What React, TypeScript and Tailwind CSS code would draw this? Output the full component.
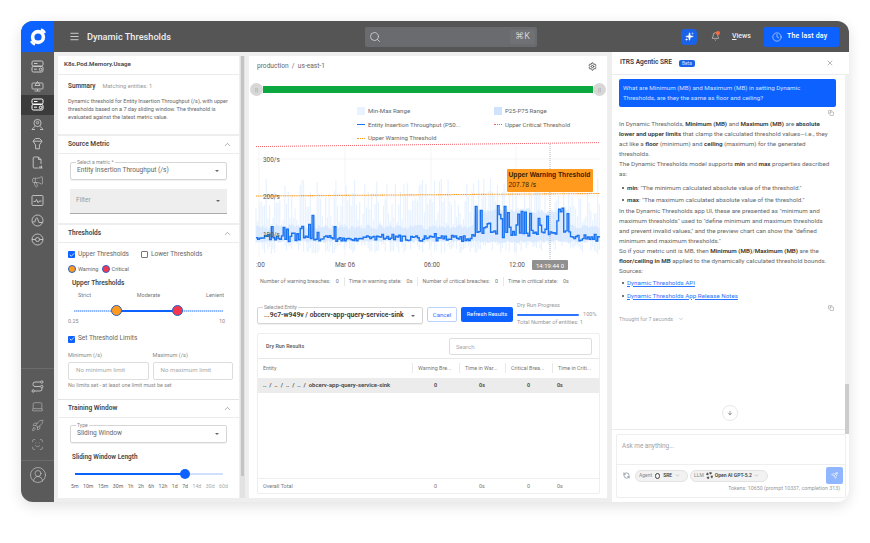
import React from "react";
import {
  ArrowDown,
  Bell,
  Check,
  ChevronDown,
  ChevronUp,
  CircleUserRound,
  Clock,
  Copy,
  Laptop,
  Menu,
  Megaphone,
  RefreshCcw,
  Rocket,
  ScanFace,
  Search,
  Send,
  Settings,
  Sparkles,
  X,
} from "lucide-react";

const font = { fontFamily: '"Roboto", "Liberation Sans", sans-serif' };

function ServerIcon() {
  return (
    <svg width="13" height="13" viewBox="0 0 13 13" fill="none" stroke="currentColor" strokeWidth="1">
      <rect x="1" y="1" width="11" height="5" rx="1.3" />
      <rect x="1" y="6.5" width="11" height="5.5" rx="1.3" />
      <path d="M3 3.5h3.5M3 9.2h3" />
      <circle cx="9.6" cy="9.4" r="1.3" />
    </svg>
  );
}

function MonitorIcon() {
  return (
    <svg width="13" height="13" viewBox="0 0 13 13" fill="none" stroke="currentColor" strokeWidth="0.9">
      <rect x="1" y="4" width="11" height="6" rx="0.8" />
      <path d="M3.5 12h6M6.5 10v2M4 6.5l2.5-4 2.5 4z" />
    </svg>
  );
}

function SearchUserIcon() {
  return (
    <svg width="13" height="13" viewBox="0 0 13 13" fill="none" stroke="currentColor" strokeWidth="0.9">
      <circle cx="6.5" cy="5" r="3.6" />
      <circle cx="6.5" cy="4.6" r="1.2" />
      <path d="M1 11.5c1-1.6 2-2.4 3.2-3.2M12 11.5c-1-1.6-2-2.4-3.2-3.2M1 11.5h3M9 11.5h3" />
    </svg>
  );
}

function FunnelIcon() {
  return (
    <svg width="13" height="13" viewBox="0 0 13 13" fill="none" stroke="currentColor" strokeWidth="0.9">
      <path d="M2 4.2 4.4 1.5h4.2L11 4.2 8.4 8v3.8H4.6V8z" />
      <path d="M2 4.2h9" />
    </svg>
  );
}

function FileIcon() {
  return (
    <svg width="13" height="13" viewBox="0 0 13 13" fill="none" stroke="currentColor" strokeWidth="0.9">
      <path d="M7.5 12H3.2a1 1 0 0 1-1-1V2a1 1 0 0 1 1-1h4.3L10 3.5V8" />
      <path d="M7.5 1v2.5H10M8 12h3.5M9 12v-2M10.5 12V9.5" />
    </svg>
  );
}

function ChartBoxIcon() {
  return (
    <svg width="13" height="13" viewBox="0 0 13 13" fill="none" stroke="currentColor" strokeWidth="0.9">
      <rect x="1" y="1.5" width="11" height="10" rx="1" />
      <path d="M2.5 7.5h2l1-2 1.6 3.2 1-1.6h2.5" />
    </svg>
  );
}

function GaugeIcon() {
  return (
    <svg width="13" height="13" viewBox="0 0 13 13" fill="none" stroke="currentColor" strokeWidth="0.9">
      <circle cx="6.5" cy="6.5" r="5.5" />
      <path d="M1.5 8h2.2l1.4-3.5c.4-1 1-1 1.4 0L8 8.5h3.5" />
    </svg>
  );
}

function TargetIcon() {
  return (
    <svg width="13" height="13" viewBox="0 0 13 13" fill="none" stroke="currentColor" strokeWidth="0.9">
      <circle cx="6.5" cy="6.5" r="5.5" />
      <circle cx="6.5" cy="6.5" r="2" />
      <path d="M1 6.5h3.5M8.5 6.5H12" />
    </svg>
  );
}

function RoutesIcon() {
  return (
    <svg width="13" height="13" viewBox="0 0 13 13" fill="none" stroke="currentColor" strokeWidth="0.9">
      <circle cx="2.2" cy="11" r="1.2" />
      <circle cx="10.8" cy="2" r="1.2" />
      <circle cx="10.8" cy="6.5" r="1.2" />
      <path d="M9.5 2H4a2 2 0 0 0-2 2v.5a2 2 0 0 0 2 2h5.5M3.5 11H9a2 2 0 0 0 2-2V7.8" />
    </svg>
  );
}

function Logo() {
  return (
    <svg width="20" height="20" viewBox="0 0 20 20" fill="none">
      <circle cx="10" cy="10" r="5.4" stroke="white" strokeWidth="3.6" />
      <path d="M13 2.4a8.2 8.2 0 0 1 4 3.4M7 17.6a8.2 8.2 0 0 1-4-3.4" stroke="white" strokeWidth="2.4" />
    </svg>
  );
}

function Sidebar() {
  const top = [ServerIcon, MonitorIcon, ServerIcon, SearchUserIcon, FunnelIcon, FileIcon, null, ChartBoxIcon, GaugeIcon, TargetIcon];
  return (
    <aside className="flex w-[33px] shrink-0 flex-col bg-[#5a5a5a] text-[#c9c9c9]">
      <div className="flex h-[31px] items-center justify-center bg-[#0d62ff]">
        <Logo />
      </div>
      <div className="mt-[5px] flex flex-col">
        {top.map((Icon, i) => (
          <div key={i} className={`flex h-[19.2px] items-center justify-center ${i === 2 ? "bg-[#3b3b3b] text-white" : ""}`}>
            {Icon ? <Icon /> : <Megaphone size={13} strokeWidth={1.1} />}
          </div>
        ))}
      </div>
      <div className="mt-auto flex flex-col items-center border-t border-[#6b6b6b] pt-[8px]">
        <div className="flex h-[19.2px] items-center"><RoutesIcon /></div>
        <div className="flex h-[19.2px] items-center"><Laptop size={13} strokeWidth={1} /></div>
        <div className="flex h-[19.2px] items-center"><Rocket size={13} strokeWidth={1} /></div>
        <div className="flex h-[19.2px] items-center"><ScanFace size={13} strokeWidth={1} /></div>
      </div>
      <div className="mt-[6px] flex h-[42px] items-start justify-center border-t border-[#6b6b6b] pt-[5px]">
        <CircleUserRound size={18} strokeWidth={0.9} />
      </div>
    </aside>
  );
}

function Header() {
  return (
    <header className="flex h-[31px] items-center bg-[#555555] text-white">
      <Menu size={11} className="ml-[15px]" strokeWidth={1.5} />
      <span className="ml-[7px] w-[278px] text-[9.2px] font-medium text-[#eeeeee]">Dynamic Thresholds</span>
      <div className="flex h-[20px] w-[172px] items-center justify-between rounded-[2px] bg-[#6a6b6e] pl-[4px] pr-[2px]">
        <Search size={12} className="text-[#d8d8d8]" strokeWidth={1.6} />
        <span className="flex h-[14px] w-[25px] items-center justify-center rounded-[2px] bg-[#707174] text-[9px] text-[#cfcfcf]">⌘K</span>
      </div>
      <div className="ml-[144px] flex h-[16px] w-[16px] items-center justify-center rounded-[4px] bg-[#1a62e8]">
        <Sparkles size={9} fill="white" strokeWidth={1} />
      </div>
      <div className="relative ml-[13px] flex w-[10px] justify-center">
        <Bell size={9} strokeWidth={1.3} />
        <span className="absolute right-[0px] top-[-1px] h-[4px] w-[4px] rounded-full bg-[#ff6a3d]" />
      </div>
      <span className="ml-[12px] w-[32px] text-[7px] font-medium text-[#eeeeee]"><u>V</u>iews</span>
      <div className="flex h-[20px] w-[75px] items-center gap-[5px] rounded-[2px] bg-[#0d62ff] pl-[8px]">
        <Clock size={10} strokeWidth={1.3} />
        <span className="text-[7px] font-medium tracking-[0.2px]">The last day</span>
      </div>
    </header>
  );
}

function Notched({ label, value, bold, className }: { label: string; value: string; bold?: boolean; className: string }) {
  return (
    <div className={`relative flex items-center justify-between rounded-[2px] border border-[#d6d6d6] pl-[6px] pr-[7px] shadow-[0_1px_1px_rgba(0,0,0,0.06)] ${className}`}>
      <span className="absolute left-[5px] top-[-3px] bg-white px-[1px] text-[5px] leading-[5px] text-[#888888]">{label}</span>
      <span className={`truncate ${bold ? "text-[6.8px] font-semibold text-[#333333]" : "text-[6.6px] text-[#666666]"}`}>{value}</span>
      <span className="h-0 w-0 border-x-[2px] border-t-[2px] border-x-transparent border-t-[#666666]" />
    </div>
  );
}

function CheckBox({ on }: { on: boolean }) {
  if (on) {
    return (
      <span className="flex h-[7px] w-[7px] items-center justify-center rounded-[1px] bg-[#0d62ff]">
        <Check size={6} color="white" strokeWidth={3} />
      </span>
    );
  }
  return <span className="h-[7px] w-[7px] rounded-[1px] border border-[#777777]" />;
}

function SectionHead({ title }: { title: string }) {
  return (
    <div className="flex h-[18px] items-center justify-between border-b border-[#ececec] pl-[10px] pr-[7px]">
      <span className="text-[6.6px] font-semibold text-[#444444]">{title}</span>
      <ChevronUp size={9} className="text-[#666666]" strokeWidth={1.4} />
    </div>
  );
}

function LeftPanel() {
  const lengths = ["5m", "10m", "15m", "30m", "1h", "2h", "6h", "12h", "1d", "7d", "14d", "30d", "60d"];
  return (
    <div className="flex shrink-0 gap-[1px]">
      <section className="h-[442px] w-[181px] overflow-hidden bg-white">
        <div className="flex h-[19px] items-center border-b border-[#ececec] pl-[6px] text-[6.2px] font-semibold text-[#444444]">K8s.Pod.Memory.Usage</div>
        <div className="h-[61px] border-b-2 border-[#eeeeee] pl-[10px] pr-[6px] pt-[7px]">
          <div className="flex items-baseline gap-[7px]">
            <span className="text-[6.4px] font-semibold text-[#444444]">Summary</span>
            <span className="text-[5.7px] text-[#999999]">Matching entities: 1</span>
          </div>
          <p className="mt-[5px] text-[5.5px] leading-[8.2px] text-[#666666]">
            Dynamic threshold for Entity Insertion Throughput (/s), with upper<br />
            thresholds based on a 7 day sliding window. The threshold is<br />
            evaluated against the latest metric value.
          </p>
        </div>
        <SectionHead title="Source Metric" />
        <div className="h-[71px] border-b-2 border-[#eeeeee] px-[12px] pt-[8px]">
          <Notched label="Select a metric *" value="Entity Insertion Throughput (/s)" className="h-[18px]" />
          <div className="mt-[9px] flex h-[25px] items-center justify-between border-b border-[#aaaaaa] bg-[#eeeeee] pl-[6px] pr-[7px] text-[6.6px] text-[#999999]">
            Filter
            <span className="h-0 w-0 border-x-[2px] border-t-[2px] border-x-transparent border-t-[#666666]" />
          </div>
        </div>
        <SectionHead title="Thresholds" />
        <div className="h-[157px] border-b border-[#e4e4e4] pl-[10px] pr-[5px] pt-[7px]">
          <div className="flex items-center gap-[3px] text-[6.5px] text-[#666666]">
            <CheckBox on />
            <span className="mr-[9px]">Upper Thresholds</span>
            <CheckBox on={false} />
            <span>Lower Thresholds</span>
          </div>
          <div className="mt-[5px] flex items-center gap-[2px] text-[5.6px] text-[#666666]">
            <span className="h-[8px] w-[8px] rounded-full border border-[#2563c9] bg-[#ff9a1f]" />
            <span className="mr-[1px]">Warning</span>
            <span className="h-[8px] w-[8px] rounded-full border border-[#2563c9] bg-[#f5364f]" />
            <span>Critical</span>
          </div>
          <div className="mt-[6px] pl-[4px] text-[6.6px] font-semibold text-[#444444]">Upper Thresholds</div>
          <div className="mt-[2px] flex justify-between pl-[10px] pr-[10px] text-[5.5px] text-[#777777]">
            <span>Strict</span>
            <span>Moderate</span>
            <span>Lenient</span>
          </div>
          <div className="relative ml-[6px] mt-[6px] h-[12px] w-[149px]">
            <div className="absolute left-0 right-0 top-[5px] h-[2px] border-y border-dotted border-[#8fb6ff] bg-[#cfe0ff]" />
            <div className="absolute left-[42px] top-[5px] h-[2px] w-[61px] bg-[#0d62ff]" />
            <span className="absolute left-[37px] top-[0px] h-[11px] w-[11px] rounded-full border border-[#2563c9] bg-[#ff9a1f]" />
            <span className="absolute left-[98px] top-[0px] h-[11px] w-[11px] rounded-full border border-[#2563c9] bg-[#f5364f]" />
          </div>
          <div className="mt-0 flex w-[157px] justify-between text-[5.4px] text-[#888888]">
            <span>0.25</span>
            <span>10</span>
          </div>
          <div className="mt-[9px] flex items-center gap-[3px] text-[6.5px] text-[#666666]">
            <CheckBox on />
            <span>Set Threshold Limits</span>
          </div>
          <div className="mt-[7px] grid w-[165px] grid-cols-2 gap-x-[4px]">
            <span className="text-[5.6px] text-[#888888]">Minimum (/s)</span>
            <span className="text-[5.6px] text-[#888888]">Maximum (/s)</span>
            <div className="mt-[2px] flex h-[18px] items-center rounded-[2px] border border-[#dddddd] pl-[7px] text-[6.2px] text-[#aaaaaa]">No minimum limit</div>
            <div className="mt-[2px] flex h-[18px] items-center rounded-[2px] border border-[#dddddd] pl-[7px] text-[6.2px] text-[#aaaaaa]">No maximum limit</div>
          </div>
          <div className="mt-[1px] text-[5.4px] text-[#888888]">No limits set - at least one limit must be set</div>
        </div>
        <SectionHead title="Training Window" />
        <div className="px-[12px] pt-[7px]">
          <Notched label="Type" value="Sliding Window" className="h-[18px]" />
          <div className="mt-[10px] pl-[2px] text-[6.4px] font-semibold text-[#444444]">Sliding Window Length</div>
          <div className="relative ml-[5px] mt-[6px] h-[10px] w-[148px]">
            <div className="absolute left-0 right-0 top-[4px] h-[2px] bg-[#cfe0ff]" />
            <div className="absolute left-0 top-[4px] h-[2px] w-[110px] bg-[#0d62ff]" />
            <span className="absolute left-[105px] top-0 h-[10px] w-[10px] rounded-full bg-[#0d62ff]" />
          </div>
          <div className="ml-[1px] mt-[4px] flex w-[157px] justify-between text-[5.2px]">
            {lengths.map((l, i) => (
              <span key={l} className={i > 9 ? "text-[#aaaaaa]" : "text-[#666666]"}>{l}</span>
            ))}
          </div>
        </div>
      </section>
      <div className="relative h-[442px] w-[5px] bg-[#e2e2e2]">
        <div className="absolute left-[1px] top-0 h-[420px] w-[3px] bg-[#c4c4c4]" />
      </div>
    </div>
  );
}

function rng(seed: number) {
  let s = seed;
  return () => {
    s = (s * 16807) % 2147483647;
    return (s - 1) / 2147483646;
  };
}

const X0 = 7;
const X1 = 351;

function envelope(x: number) {
  if (x > 225 && x < 320) return 1;
  if (x > 50 && x < 70) return 0.85;
  if (x > 20 && x < 90) return 0.45;
  return 0.15;
}

function buildChart() {
  const r = rng(4711);
  const points: { x: number; y: number; lo: number; hi: number; p25: number; p75: number }[] = [];
  for (let x = X0; x <= X1; x += 1.7) {
    const e = envelope(x);
    const spike = r() < 0.5 ? r() * 32 * e : r() * 6;
    const y = 97 - spike + r() * 3 - (e > 0.9 ? 4 : 0);
    points.push({
      x,
      y,
      lo: 112 - r() * 16,
      hi: r() < 0.2 ? 36 + r() * 8 : 48 + r() * 36,
      p25: 98 + r() * 3,
      p75: (e > 0.9 ? 66 : 82) + r() * 6,
    });
  }
  let line = `M${points[0].x} ${points[0].y.toFixed(1)}`;
  points.forEach((p) => {
    line += `H${p.x.toFixed(1)}V${p.y.toFixed(1)}`;
  });
  const band =
    points.map((p, i) => `${i ? "L" : "M"}${p.x.toFixed(1)} ${p.p75.toFixed(1)}`).join("") +
    [...points].reverse().map((p) => `L${p.x.toFixed(1)} ${p.p25.toFixed(1)}`).join("") +
    "Z";
  return { points, line, band };
}

const chart = buildChart();

function Chart() {
  const ticks = [
    { x: 96, label: "Mar 06" },
    { x: 183, label: "06:00" },
    { x: 268, label: "12:00" },
  ];
  return (
    <div className="relative h-[136px] w-[358px]">
      <svg width="358" height="136" viewBox="0 0 358 136" style={font}>
        {[17, 54, 92].map((y) => (
          <line key={y} x1={X0} x2={X1} y1={y} y2={y} stroke="#f1f1f1" strokeWidth="0.7" />
        ))}
        {[10, 96, 182, 267].map((x) => (
          <line key={x} x1={x} x2={x} y1="4" y2="115" stroke="#f1f1f1" strokeWidth="0.7" />
        ))}
        {chart.points.map((p, i) => (
          <line key={i} x1={p.x} x2={p.x} y1={p.hi} y2={p.lo} stroke="#e6f1ff" strokeWidth="1.1" />
        ))}
        <path d={chart.band} fill="#cfe3ff" opacity="0.65" />
        <path d={chart.line} fill="none" stroke="#1a73f0" strokeWidth="1.4" />
        <path d={`M${X0} 4.6 L${X1} 0.6`} stroke="#f0626b" strokeWidth="1" strokeDasharray="1 1" fill="none" />
        <path d={`M${X0} 54 L${X1} 51.5`} stroke="#ff9a1f" strokeWidth="1.1" strokeDasharray="1.2 0.6" fill="none" />
        <line x1="301" x2="301" y1="2" y2="118" stroke="#999999" strokeWidth="0.7" strokeDasharray="1 1" />
        <text x="14" y="20" fontSize="6.4" fill="#555555">300/s</text>
        <text x="14" y="57" fontSize="6.4" fill="#555555">200/s</text>
        <text x="14" y="95" fontSize="6.4" fill="#555555">100/s</text>
        <text x="7" y="124.5" fontSize="6.4" fill="#555555">:00</text>
        {ticks.map((t) => (
          <text key={t.x} x={t.x} y="124.5" fontSize="6.4" fill="#555555" textAnchor="middle">{t.label}</text>
        ))}
      </svg>
      <div className="absolute left-[258px] top-[27px] h-[23px] w-[86px] whitespace-nowrap rounded-[1px] bg-[#ff9a1f] pl-[1.5px] pt-[1px] text-[6.7px] leading-[10px] text-[#3a2200]" style={{ fontFamily: '"Liberation Sans", sans-serif' }}>
        <div className="font-bold">Upper Warning Threshold</div>
        <div>207.78 /s</div>
      </div>
      <div className="absolute left-[283px] top-[118px] flex h-[10px] w-[36px] items-center justify-center rounded-[1px] bg-[#909090] text-[6px] text-white">14:19:44 0</div>
    </div>
  );
}

function CenterPanel() {
  const stats = [
    ["Number of warning breaches:", "0"],
    ["Time in warning state:", "0s"],
    ["Number of critical breaches:", "0"],
    ["Time in critical state:", "0s"],
  ];
  return (
    <section className="flex h-[442px] w-[358px] shrink-0 flex-col bg-white">
      <div className="flex h-[20px] items-center justify-between pl-[8px] pr-[10px] pt-[1px]">
        <span className="text-[6.6px] text-[#666666]">production&nbsp;&nbsp;/&nbsp;&nbsp;us-east-1</span>
        <Settings size={9} strokeWidth={2.6} className="text-[#555555]" />
      </div>
      <div className="relative mx-[14px] mt-[10px] h-[7px] bg-[#0aa83f]">
        <span className="absolute left-[-13px] top-[-3px] flex h-[13px] w-[13px] items-center justify-center rounded-full bg-[#d7d7d7] text-[6px] text-[#999999]">||</span>
        <span className="absolute right-[-13px] top-[-3px] flex h-[13px] w-[13px] items-center justify-center rounded-full bg-[#d7d7d7] text-[6px] text-[#999999]">||</span>
      </div>
      <div className="ml-[108px] mt-[14px] grid grid-cols-[137px_auto] gap-y-[5.5px] text-[6.1px] leading-[8px] text-[#666666]">
        <div className="flex items-center gap-[3px]"><span className="h-[8px] w-[8px] bg-[#e9f2ff]" />Min-Max Range</div>
        <div className="flex items-center gap-[3px]"><span className="h-[8px] w-[8px] bg-[#cfe3ff]" />P25-P75 Range</div>
        <div className="flex items-center gap-[3px]"><span className="h-px w-[8px] bg-[#1a73f0]" />Entity Insertion Throughput (P50...</div>
        <div className="flex items-center gap-[3px]"><span className="h-0 w-[8px] border-t border-dotted border-[#f0626b]" />Upper Critical Threshold</div>
        <div className="flex items-center gap-[3px]"><span className="h-0 w-[8px] border-t border-dotted border-[#ff9a1f]" />Upper Warning Threshold</div>
      </div>
      <Chart />
      <div className="ml-[11px] mt-[-1px] flex h-[9px] items-center text-[5.4px] text-[#777777]">
        {stats.map(([k, v], i) => (
          <span key={k} className={`flex gap-[5px] pr-[4px] ${i ? "ml-[1px] border-l border-[#e8e8e8] pl-[4px]" : ""}`}>
            <span>{k}</span>
            <span>{v}</span>
          </span>
        ))}
      </div>
      <div className="ml-[8px] mt-[16px] flex items-start">
        <Notched label="Selected Entity" value="...9c7-w949v / obcerv-app-query-service-sink" bold className="mt-[5px] h-[17px] w-[166px]" />
        <button className="ml-[4px] mt-[5px] h-[15px] w-[30px] rounded-[2px] border border-[#bcd3ff] text-[6px] text-[#2b74ff]">Cancel</button>
        <button className="ml-[4px] mt-[5px] h-[15px] w-[52px] rounded-[2px] bg-[#0d62ff] text-[5.8px] text-white">Refresh Results</button>
        <div className="ml-[4px] w-[80px] text-[5.6px] leading-[7px] text-[#999999]">
          <div>Dry Run Progress</div>
          <div className="mt-[2px] flex items-center gap-[4px]">
            <span className="h-[2px] w-[62px] rounded-full bg-[#2b74ff]" />
            <span>100%</span>
          </div>
          <div className="mt-[1px]">Total Number of entities: 1</div>
        </div>
      </div>
      <div className="ml-[8px] mt-[7px] flex h-[161px] w-[343px] flex-col rounded-[2px] border border-[#eeeeee] text-[5.4px] text-[#777777]">
        <div className="flex h-[25px] items-center justify-between border-b border-[#e8e8e8] pl-[8px] pr-[7px]">
          <span className="font-medium text-[#555555]">Dry Run Results</span>
          <div className="flex h-[17px] w-[143px] items-center rounded-[2px] border border-[#dddddd] pl-[6px] text-[6px] text-[#aaaaaa]">Search</div>
        </div>
        <div className="grid h-[18.5px] grid-cols-[154px_47px_46px_47px_1fr] items-center">
          <span className="pl-[5px]">Entity</span>
          <span className="border-l border-[#e8e8e8] pl-[5px] leading-[10px]">Warning Bre...</span>
          <span className="border-l border-[#e8e8e8] pl-[5px] leading-[10px]">Time in War...</span>
          <span className="border-l border-[#e8e8e8] pl-[5px] leading-[10px]">Critical Brea...</span>
          <span className="border-l border-[#e8e8e8] pl-[5px] leading-[10px]">Time in Criti...</span>
        </div>
        <div className="grid h-[15px] grid-cols-[154px_47px_46px_47px_1fr] items-center bg-[#ececec] font-semibold text-[#444444]">
          <span className="pl-[5px] text-[5.9px]">..&nbsp;&nbsp;/&nbsp;&nbsp;..&nbsp;&nbsp;/&nbsp;&nbsp;..&nbsp;&nbsp;/&nbsp;&nbsp;..&nbsp;&nbsp;/&nbsp;&nbsp;obcerv-app-query-service-sink</span>
          <span className="text-center">0</span>
          <span className="text-center">0s</span>
          <span className="text-center">0</span>
          <span className="pl-[5px]">0s</span>
        </div>
        <div className="mt-auto grid h-[15px] grid-cols-[154px_47px_46px_47px_1fr] items-center border-t border-[#eeeeee]">
          <span className="pl-[5px]">Overall Total</span>
          <span className="text-center">0</span>
          <span className="text-center">0s</span>
          <span className="text-center">0</span>
          <span className="pl-[5px]">0s</span>
        </div>
      </div>
    </section>
  );
}

function Bullet({ className, children }: { className: string; children: React.ReactNode }) {
  return (
    <div className={`flex items-center gap-[3px] pl-[3px] ${className}`}>
      <span className="h-[2px] w-[2px] shrink-0 rounded-full bg-[#444444]" />
      <span>{children}</span>
    </div>
  );
}

function RightPanel() {
  const b = "font-semibold text-[#333333]";
  return (
    <section className="relative flex w-[237px] shrink-0 flex-col bg-white">
      <div className="flex h-[23px] shrink-0 items-center border-b border-[#ececec] pl-[8px] pr-[15px]">
        <span className="text-[6.6px] font-semibold text-[#3a3a4a]">ITRS Agentic SRE</span>
        <span className="ml-[7px] rounded-[2px] bg-[#1a62e8] px-[3px] text-[4.8px] leading-[7px] text-[#d5e2ff]">Beta</span>
        <X size={8} className="ml-auto text-[#666666]" strokeWidth={1.4} />
      </div>
      <div className="min-h-0 flex-1 pl-[7px] pr-[13px] pt-[4px] text-[6.25px] leading-[10px] text-[#666666]">
        <div className="h-[28px] rounded-[2px] bg-[#0d62ff] px-[4px] pt-[4px] text-[#cfe0ff]">
          What are Minimum (MB) and Maximum (MB) in setting Dynamic<br />
          Thresholds, are they the same as floor and ceiling?
        </div>
        <div className="flex h-[11px] items-center justify-end pr-[2px]"><Copy size={6} className="text-[#888888]" /></div>
        <p className="mt-[1px]">
          In Dynamic Thresholds, <span className={b}>Minimum (MB)</span> and <span className={b}>Maximum (MB)</span> are <span className={b}>absolute</span><br />
          <span className={b}>lower and upper limits</span> that clamp the calculated threshold values—i.e., they<br />
          act like a <span className={b}>floor</span> (minimum) and <span className={b}>ceiling</span> (maximum) for the generated<br />
          thresholds.<br />
          The Dynamic Thresholds model supports <span className={b}>min</span> and <span className={b}>max</span> properties described<br />
          as:
        </p>
        <div className="mt-[2px]">
          <Bullet className="h-[13px]"><span className={b}>min</span>: "The minimum calculated absolute value of the threshold."</Bullet>
          <Bullet className="h-[12px]"><span className={b}>max</span>: "The maximum calculated absolute value of the threshold."</Bullet>
        </div>
        <p>
          In the Dynamic Thresholds app UI, these are presented as "minimum and<br />
          maximum thresholds" used to "define minimum and maximum thresholds<br />
          and prevent invalid values," and the preview chart can show the "defined<br />
          minimum and maximum thresholds."<br />
          So if your metric unit is MB, then <span className={b}>Minimum (MB)</span>/<span className={b}>Maximum (MB)</span> are the<br />
          <span className={b}>floor/ceiling in MB</span> applied to the dynamically calculated threshold bounds.<br />
          Sources:
        </p>
        <div className="text-[#2b74ff]">
          <Bullet className="h-[13px] underline">Dynamic Thresholds API</Bullet>
          <Bullet className="h-[13px] underline">Dynamic Thresholds App Release Notes</Bullet>
        </div>
        <div className="flex h-[11px] items-center justify-end pr-[2px]"><Copy size={6} className="text-[#888888]" /></div>
        <div className="mt-[1px] flex items-center gap-[5px] text-[5.4px] text-[#9aa3ad]">
          Thought for 7 seconds <ChevronDown size={6} />
        </div>
      </div>
      <div className="absolute right-0 top-[23px] h-[359px] w-[4px] bg-[#f0f0f0]">
        <div className="absolute bottom-0 h-[50px] w-[4px] bg-[#cccccc]" />
      </div>
      <div className="absolute left-[110px] top-[353px] flex h-[16px] w-[16px] items-center justify-center rounded-full border border-[#e8e8e8] bg-white">
        <ArrowDown size={6} className="text-[#444444]" strokeWidth={2} />
      </div>
      <div className="shrink-0 border-t border-[#ececec] pb-[4px] pl-[4px] pr-[3px] pt-[4px]">
        <div className="flex h-[64px] flex-col rounded-[2px] border border-[#eeeeee]">
          <div className="h-[30px] border-b border-[#eeeeee] pl-[5px] pt-[7px] text-[6.4px] leading-[8px] text-[#9aa3ad]">Ask me anything...</div>
          <div className="flex items-center pl-[6px] pr-[2px] pt-[2px] text-[5px] text-[#888888]">
            <RefreshCcw size={7} className="text-[#607080]" />
            <span className="ml-[5px] flex h-[12px] w-[53px] items-center gap-[3px] rounded-full border border-[#e2e2e2] bg-[#f2f2f2] pl-[3px]">
              Agent
              <span className="h-[6px] w-[5px] rounded-full border border-[#444444]" />
              <span className="font-semibold text-[#444444]">SRE</span>
              <ChevronDown size={5} />
            </span>
            <span className="ml-[2px] flex h-[12px] w-[78px] items-center gap-[2px] rounded-full border border-[#e2e2e2] bg-[#f2f2f2] pl-[3px]">
              LLM
              <span className="h-[7px] w-[7px] rounded-full border-2 border-dotted border-[#555555]" />
              <span className="font-semibold text-[#444444]">Open AI GPT-5.2</span>
              <ChevronDown size={5} />
            </span>
            <span className="ml-auto flex h-[17px] w-[17px] items-center justify-center rounded-[2px] bg-[#8fb6ff]">
              <Send size={7} color="white" />
            </span>
          </div>
          <div className="pr-[5px] text-right text-[5.3px] leading-[8px] text-[#999999]">Tokens: 10650 (prompt 10337, completion 313)</div>
        </div>
      </div>
    </section>
  );
}

export default function App() {
  return (
    <div className="h-[543px] w-[870px] overflow-hidden bg-white pl-[21px] pt-[21px]" style={font}>
      <div className="flex h-[481px] w-[828px] overflow-hidden rounded-[12px] bg-[#eeeeee] shadow-[0_4px_14px_rgba(0,0,0,0.12)]">
        <Sidebar />
        <main className="flex min-w-0 flex-1 flex-col">
          <Header />
          <div className="flex min-h-0 flex-1">
            <div className="flex gap-[4px] pl-[4px] pt-[4px]">
              <LeftPanel />
              <CenterPanel />
            </div>
            <div className="ml-[5px] flex min-h-0">
              <RightPanel />
            </div>
          </div>
        </main>
      </div>
    </div>
  );
}
